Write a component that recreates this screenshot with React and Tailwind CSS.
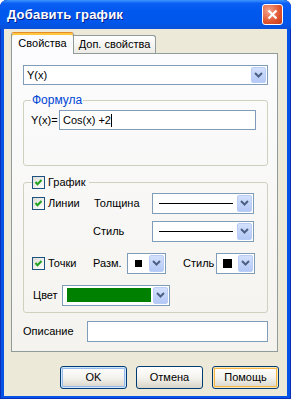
import React from 'react'

// XP-style "Добавить график" dialog

function Arrow() {
  return (
    <svg width="9" height="6" viewBox="0 0 9 6">
      <path d="M1 1 L4.5 4.5 L8 1" fill="none" stroke="#4d6185" strokeWidth="2" />
    </svg>
  )
}

function Combo({ className, children }) {
  return (
    <div className={`flex items-stretch bg-white border border-[#7f9db9] p-[1px] ${className}`}>
      <div className="flex-1 flex items-center min-w-0">{children}</div>
      <div className="w-[15px] flex items-center justify-center rounded-[2px] border border-[#b9cdf7] bg-gradient-to-b from-[#d3e0fc] to-[#b4c9f6]">
        <Arrow />
      </div>
    </div>
  )
}

function Check({ label, className = '' }) {
  return (
    <div className={`flex items-center ${className}`}>
      <div className="w-[13px] h-[13px] border border-[#1c5180] bg-gradient-to-br from-[#dcdcd7] to-white flex items-center justify-center">
        <svg width="9" height="9" viewBox="0 0 9 9">
          <path d="M1.5 4 L3.5 6.2 L7.5 2" fill="none" stroke="#21a121" strokeWidth="2" />
        </svg>
      </div>
      <span className="ml-[3px]">{label}</span>
    </div>
  )
}

function Button({ children, variant }) {
  const ring =
    variant === 'default'
      ? 'shadow-[inset_0_0_0_1px_#cee7ff,inset_0_0_0_2px_#98b8ea]'
      : variant === 'hot'
      ? 'shadow-[inset_0_0_0_1px_#fce7b2,inset_0_0_0_2px_#f5b547]'
      : ''
  return (
    <div
      className={`w-[67px] h-[23px] flex items-center justify-center rounded-[3px] border border-[#003c74] bg-gradient-to-b from-white via-[#f4f3ee] to-[#d8d4c8] ${ring}`}
    >
      {children}
    </div>
  )
}

export default function App() {
  return (
    <div className="w-[291px] h-[399px] flex flex-col rounded-t-[7px] bg-[#0553e6] shadow-[inset_0_0_0_1px_#0a2fb8] font-['Liberation_Sans',Arial,sans-serif] text-[11px] text-black overflow-hidden">
      {/* title bar */}
      <div className="h-[29px] flex items-center justify-between pl-[7px] pr-[8px] rounded-t-[7px] bg-[linear-gradient(to_bottom,#3d95ff_0%,#0a5ef4_12%,#0058ee_40%,#0056ea_80%,#0a4fd8_100%)]">
        <span className="text-white font-bold text-[13px] tracking-[0.2px] [text-shadow:1px_1px_0_#0a1e8a]">
          Добавить график
        </span>
        <div className="w-[21px] h-[21px] rounded-[3px] border border-white bg-[radial-gradient(circle_at_30%_30%,#f3a48c,#e0542f_60%,#c43b1a)] flex items-center justify-center">
          <svg width="11" height="11" viewBox="0 0 11 11">
            <path d="M1.5 1.5 L9.5 9.5 M9.5 1.5 L1.5 9.5" stroke="white" strokeWidth="2.2" />
          </svg>
        </div>
      </div>

      {/* body */}
      <div className="flex-1 mx-[4px] mb-[3px] bg-[#ece9d8] flex flex-col">
        {/* tabs */}
        <div className="flex items-end pl-[7px] pt-[3px]">
          <div className="relative z-10 w-[63px] h-[22px] -mb-[1px] flex items-center justify-center bg-[#fcfcfe] border-x border-[#919b9c] shadow-[inset_0_2px_0_#ffc73c] border-t border-t-[#e68b2c] rounded-t-[3px] pb-[1px]">
            Свойства
          </div>
          <div className="w-[82px] h-[18px] flex items-center justify-center border border-b-0 border-l-0 border-[#919b9c] rounded-tr-[3px] bg-gradient-to-b from-white to-[#ecebe5]">
            Доп. свойства
          </div>
        </div>

        {/* tab panel */}
        <div className="ml-[7px] w-[267px] h-[299px] border border-[#919b9c] bg-gradient-to-b from-[#fcfcfe] to-[#f4f3ee] flex flex-col pl-[11px] pt-[11px]">
          <Combo className="w-[245px] h-[20px]">
            <span className="pl-[2px]">Y(x)</span>
          </Combo>

          <fieldset className="mt-[6px] w-[245px] h-[75px] border border-[#d0d0bf] rounded-[3px] pl-[7px]">
            <legend className="px-[1px] text-[#0046d5] text-[12px]">Формула</legend>
            <div className="flex items-center mt-[1px]">
              <span className="w-[28px]">Y(x)=</span>
              <div className="w-[197px] h-[20px] border border-[#7f9db9] bg-white flex items-center pl-[3px]">
                Cos(x) +2<span className="w-[1px] h-[13px] bg-black" />
              </div>
            </div>
          </fieldset>

          <fieldset className="mt-[8px] w-[245px] h-[139px] border border-[#d0d0bf] rounded-[3px] pl-[8px]">
            <legend className="pr-[3px]">
              <Check label="График" />
            </legend>
            <div className="flex items-center mt-[2px]">
              <Check label="Линии" className="w-[62px]" />
              <span className="w-[58px]">Толщина</span>
              <Combo className="w-[102px] h-[21px]">
                <div className="ml-[5px] w-[74px] h-[1px] bg-black" />
              </Combo>
            </div>
            <div className="flex items-center mt-[7px]">
              <span className="ml-[61px] w-[59px]">Стиль</span>
              <Combo className="w-[102px] h-[21px]">
                <div className="ml-[5px] w-[74px] h-[1px] bg-black" />
              </Combo>
            </div>
            <div className="flex items-center mt-[11px]">
              <Check label="Точки" className="w-[61px]" />
              <span className="w-[34px]">Разм.</span>
              <Combo className="w-[39px] h-[21px]">
                <div className="ml-[6px] w-[7px] h-[7px] bg-black" />
              </Combo>
              <span className="ml-[17px] w-[33px]">Стиль</span>
              <Combo className="w-[39px] h-[21px]">
                <div className="ml-[5px] w-[9px] h-[9px] bg-black" />
              </Combo>
            </div>
            <div className="flex items-center mt-[11px]">
              <span className="ml-[1px] w-[29px]">Цвет</span>
              <Combo className="w-[108px] h-[21px]">
                <div className="ml-[3px] w-[84px] h-[14px] bg-[#008000]" />
              </Combo>
            </div>
          </fieldset>

          <div className="flex items-center mt-[8px]">
            <span className="w-[64px]">Описание</span>
            <div className="w-[181px] h-[21px] border border-[#7f9db9] bg-white" />
          </div>
        </div>

        {/* buttons */}
        <div className="flex justify-end gap-[9px] pr-[8px] mt-[14px]">
          <Button variant="default">OK</Button>
          <Button>Отмена</Button>
          <Button variant="hot">Помощь</Button>
        </div>
      </div>
    </div>
  )
}
